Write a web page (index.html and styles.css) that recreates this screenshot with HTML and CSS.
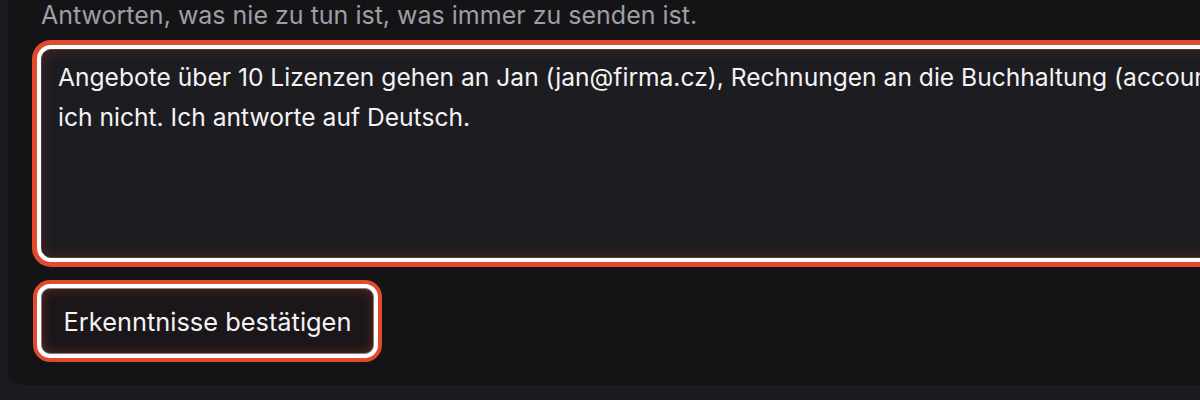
FILE: index.html
```html
<!DOCTYPE html>
<html lang="de">
<head>
<meta charset="utf-8">
<link rel="stylesheet" href="styles.css">
</head>
<body>
<div class="card">
  <p class="label">Antworten, was nie zu tun ist, was immer zu senden ist.</p>
  <div class="field">Angebote über 10 Lizenzen gehen an Jan (jan@firma.cz), Rechnungen an die Buchhaltung (accounting@firma.cz). Rabatte gewähre
ich nicht. Ich antworte auf Deutsch.</div>
  <button class="btn" type="button">Erkenntnisse bestätigen</button>
</div>
</body>
</html>
```
FILE: styles.css
```css
html, body {
  margin: 0;
  padding: 0;
  background: #1b1b1f;
  height: 400px;
  overflow: hidden;
}
body {
  font-family: Inter, "Liberation Sans", sans-serif;
}
.card {
  margin-left: 8px;
  width: 1900px;
  background: #141417;
  border-radius: 0 0 0 14px;
  padding: 0 0 31px 33px;
  box-sizing: border-box;
}
.label {
  margin: 0 0 19px 0;
  font-size: 25px;
  line-height: 30px;
  color: #9e9ea5;
  white-space: nowrap;
}
.field {
  width: 1800px;
  height: 209px;
  box-sizing: border-box;
  border: 1px solid #4a3a38;
  border-radius: 10px;
  background: #1d1c21;
  color: #f3f3f5;
  font-size: 24.6px;
  line-height: 40px;
  padding: 7px 16px;
  white-space: pre-line;
  box-shadow: inset 0 0 14px rgba(227, 75, 46, 0.22), 0 0 0 4px #ffffff, 0 0 0 9px #e24a2e;
  margin-bottom: 30px;
}
.btn {
  display: block;
  height: 66px;
  width: 333px;
  box-sizing: border-box;
  border: 1px solid #8a7f80;
  border-radius: 9px;
  background: #1a1619;
  color: #f3f3f5;
  font-family: Inter, "Liberation Sans", sans-serif;
  font-size: 25.4px;
  padding: 0 16px;
  text-align: center;
  white-space: nowrap;
  box-shadow: inset 0 0 12px rgba(227, 75, 46, 0.35), 0 0 0 4px #ffffff, 0 0 0 8px #e24a2e;
}
```
